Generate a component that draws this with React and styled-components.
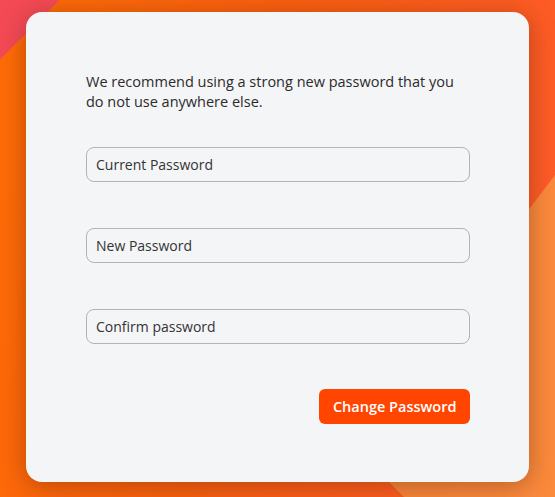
import React from 'react'
import styled, { createGlobalStyle } from 'styled-components'

const Global = createGlobalStyle`
  html, body {
    margin: 0;
    height: 100%;
  }
  body {
    font-family: "Open Sans", Lato, sans-serif;
  }
  #root {
    height: 100%;
  }
`

const Page = styled.div`
  position: relative;
  height: 100%;
  box-sizing: border-box;
  padding: 12px 26px 15px;
  display: flex;
  overflow: hidden;
  background:
    linear-gradient(135deg, #f44a55 0, #f44a55 42px, transparent 42px),
    linear-gradient(100deg, #ff6c06 0%, #fa6010 45%, #ff5a2c 100%);

  &::before {
    content: '';
    position: absolute;
    inset: 0;
    background: linear-gradient(90deg, #f08036, #fb8a3c);
    clip-path: polygon(555px 175px, 555px 497px, 404px 497px, 351px 444px);
  }
`

const Card = styled.div`
  position: relative;
  flex: 1;
  box-sizing: border-box;
  padding: 60px 59px 59px 60px;
  background: #f4f5f7;
  border-radius: 16px;
  box-shadow: 0 4px 26px rgba(60, 20, 0, 0.35);
  display: flex;
  flex-direction: column;
`

const Intro = styled.p`
  margin: 0 0 35px;
  font-size: 14.5px;
  line-height: 20px;
  color: #2b2b2b;
`

const Fields = styled.div`
  display: flex;
  flex-direction: column;
  gap: 46px;
`

const Input = styled.input`
  box-sizing: border-box;
  height: 35px;
  width: 100%;
  padding: 0 9px;
  border: 1px solid #b3b3b5;
  border-radius: 8px;
  background: #f4f5f7;
  font-family: inherit;
  font-size: 14px;
  color: #2b2b2b;
  outline: none;

  &::placeholder {
    color: #333;
    opacity: 1;
  }
`

const Actions = styled.div`
  display: flex;
  justify-content: flex-end;
  margin-top: 45px;
`

const Button = styled.button`
  height: 35px;
  padding: 0 13.5px;
  border: none;
  border-radius: 6px;
  background: #ff4500;
  color: #fff;
  font-family: inherit;
  font-weight: 600;
  font-size: 14.5px;
  cursor: pointer;
`

const App = () => {
  return (
    <>
      <Global />
      <Page>
        <Card>
          <Intro>
            We recommend using a strong new password that you do not use anywhere else.
          </Intro>
          <Fields>
            <Input type="password" placeholder="Current Password" />
            <Input type="password" placeholder="New Password" />
            <Input type="password" placeholder="Confirm password" />
          </Fields>
          <Actions>
            <Button>Change Password</Button>
          </Actions>
        </Card>
      </Page>
    </>
  )
}

export default App
